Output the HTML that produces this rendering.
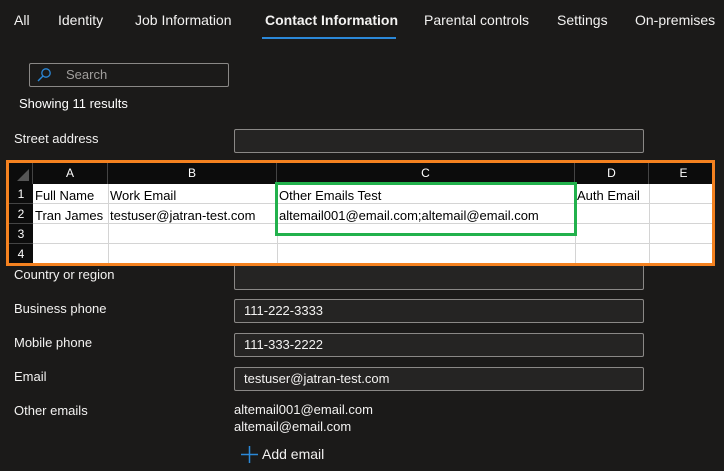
<!DOCTYPE html>
<html><head><meta charset="utf-8"><style>
*{margin:0;padding:0;box-sizing:border-box}
body{width:724px;height:471px;background:#1b1a19;font-family:"Segoe UI","Liberation Sans",sans-serif;color:#fff;position:relative;overflow:hidden;font-size:13px}
.a{position:absolute;white-space:nowrap}
.tab{position:absolute;top:12px;font-size:14px;color:#f3f2f1}
.inp{position:absolute;left:234px;width:410px;height:24px;border:1px solid #8a8886;background:#252423;border-radius:2px;padding-left:9px;line-height:22px;font-size:13px;color:#f3f2f1}
.lbl{position:absolute;left:14px;font-size:13px;color:#f3f2f1}
#sheet{position:absolute;left:6px;top:160px;width:709px;height:106px;border:3px solid #f58220;background:#fff;overflow:hidden}
.hd{position:absolute;top:0;height:21px;background:#0c0c0c;color:#fff;font-family:"Liberation Sans",sans-serif;font-size:12px;text-align:center;line-height:21px;border-right:1px solid #444}
.rn{position:absolute;left:0;width:24px;background:#0c0c0c;color:#fff;font-family:"Liberation Sans",sans-serif;font-size:12px;text-align:center;border-bottom:1px solid #444}
.vl{position:absolute;top:21px;bottom:0;width:1px;background:#d4d4d4}
.hl{position:absolute;left:24px;right:0;height:1px;background:#d4d4d4}
.c{position:absolute;color:#000;font-family:"Liberation Sans",sans-serif;font-size:13px}
</style></head><body>
<div class="tab" style="left:14px">All</div>
<div class="tab" style="left:58px">Identity</div>
<div class="tab" style="left:135px">Job Information</div>
<div class="tab" style="left:265px;font-weight:bold">Contact Information</div>
<div class="tab" style="left:424px">Parental controls</div>
<div class="tab" style="left:557px">Settings</div>
<div class="tab" style="left:635px">On-premises</div>
<div class="a" style="left:262px;top:37px;width:134px;height:2px;background:#2b88d8"></div>

<div class="a" style="left:29px;top:63px;width:200px;height:24px;border:1px solid #8a8886;border-radius:2px"></div>
<svg class="a" style="left:36px;top:67px" width="16" height="16" viewBox="0 0 16 16"><circle cx="10" cy="6" r="4.2" fill="none" stroke="#2b88d8" stroke-width="1.3"/><line x1="7" y1="9" x2="2" y2="14" stroke="#2b88d8" stroke-width="1.4"/></svg>
<div class="a" style="left:66px;top:67px;color:#a19f9d;font-size:13px">Search</div>
<div class="a" style="left:19px;top:96px;font-size:13px">Showing 11 results</div>

<div class="lbl" style="top:131px">Street address</div>
<div class="inp" style="top:129px"></div>

<div class="lbl" style="top:267px">Country or region</div>
<div class="inp" style="top:264px;height:26px"></div>
<div class="lbl" style="top:301px">Business phone</div>
<div class="inp" style="top:299px">111-222-3333</div>
<div class="lbl" style="top:335px">Mobile phone</div>
<div class="inp" style="top:333px">111-333-2222</div>
<div class="lbl" style="top:369px">Email</div>
<div class="inp" style="top:367px">testuser@jatran-test.com</div>
<div class="lbl" style="top:403px">Other emails</div>
<div class="a" style="left:234px;top:402px;color:#f3f2f1">altemail001@email.com</div>
<div class="a" style="left:234px;top:419px;color:#f3f2f1">altemail@email.com</div>
<svg class="a" style="left:241px;top:446px" width="17" height="17"><line x1="8.5" y1="0" x2="8.5" y2="17" stroke="#2b88d8" stroke-width="1.5"/><line x1="0" y1="8.5" x2="17" y2="8.5" stroke="#2b88d8" stroke-width="1.5"/></svg>
<div class="a" style="left:262px;top:446px;font-size:14px;color:#f3f2f1">Add email</div>

<div id="sheet">
<div class="hd" style="left:0;width:24px"><svg width="24" height="21" style="position:absolute;left:0;top:0"><polygon points="20,6 20,18 8,18" fill="#555"/></svg></div>
<div class="hd" style="left:24px;width:75px">A</div>
<div class="hd" style="left:99px;width:169px">B</div>
<div class="hd" style="left:268px;width:298px">C</div>
<div class="hd" style="left:566px;width:74px">D</div>
<div class="hd" style="left:640px;width:69px;border-right:none">E</div>
<div class="rn" style="top:21px;height:20px;line-height:20px">1</div>
<div class="rn" style="top:41px;height:20px;line-height:20px">2</div>
<div class="rn" style="top:61px;height:20px;line-height:20px">3</div>
<div class="rn" style="top:81px;height:20px;line-height:20px;border-bottom:none">4</div>
<div class="vl" style="left:99px"></div><div class="vl" style="left:268px"></div><div class="vl" style="left:566px"></div><div class="vl" style="left:640px"></div>
<div class="hl" style="top:40px"></div><div class="hl" style="top:60px"></div><div class="hl" style="top:80px"></div>
<div class="c" style="left:26px;top:25px">Full Name</div>
<div class="c" style="left:101px;top:25px">Work Email</div>
<div class="c" style="left:270px;top:25px">Other Emails Test</div>
<div class="c" style="left:568px;top:25px">Auth Email</div>
<div class="c" style="left:26px;top:45px">Tran James</div>
<div class="c" style="left:101px;top:45px">testuser@jatran-test.com</div>
<div class="c" style="left:270px;top:45px">altemail001@email.com;altemail@email.com</div>
<div style="position:absolute;left:266px;top:19px;width:302px;height:54px;border:3px solid #22b14c"></div>
</div>
</body></html>
